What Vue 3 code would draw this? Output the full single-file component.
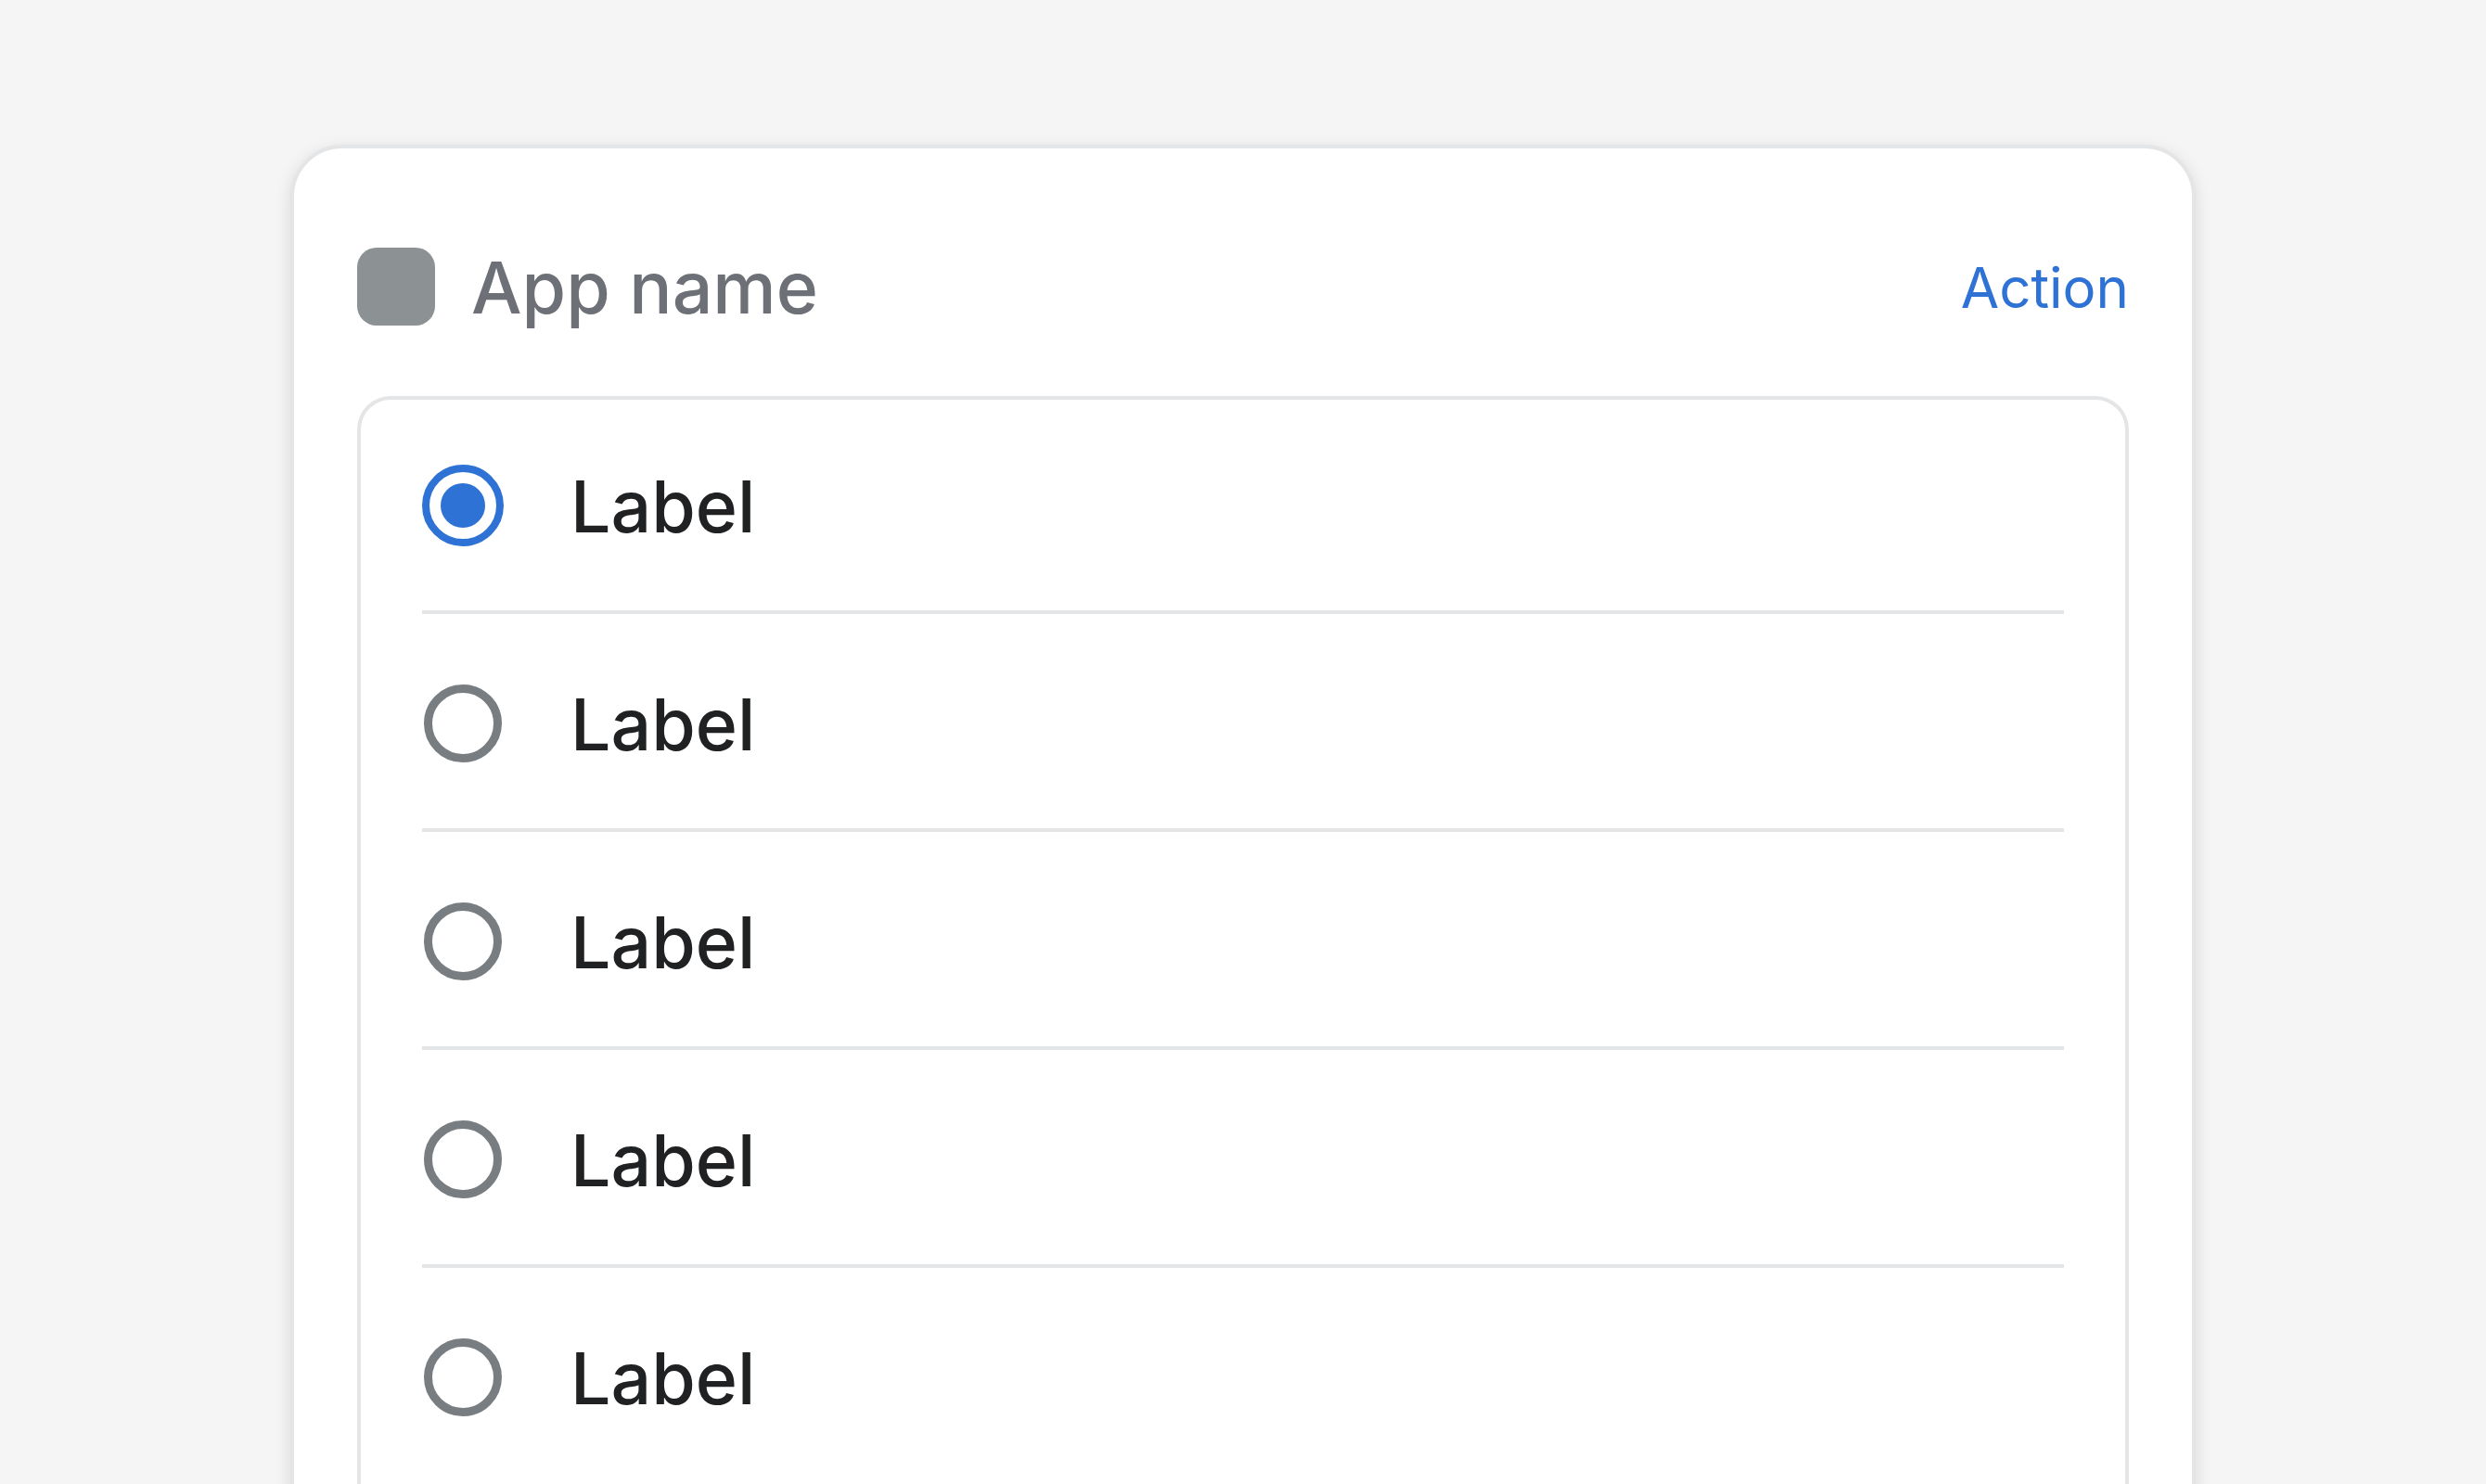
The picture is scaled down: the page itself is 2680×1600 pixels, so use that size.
<script setup>
import { ref } from 'vue'

const options = [1, 2, 3, 4, 5]
const selected = ref(1)
</script>

<template>
  <main class="page">
    <section class="card">
      <header class="card-header">
        <span class="app-icon" aria-hidden="true"></span>
        <h1 class="app-name">App name</h1>
        <button type="button" class="action">Action</button>
      </header>
      <ul class="options">
        <li v-for="id in options" :key="id" class="option">
          <input
            :id="`option-${id}`"
            v-model="selected"
            class="radio"
            type="radio"
            name="option"
            :value="id"
          />
          <label class="option-label" :for="`option-${id}`">Label</label>
        </li>
      </ul>
    </section>
  </main>
</template>

<style>
body {
  margin: 0;
  background: #f5f5f5;
}
</style>

<style scoped>
.page {
  box-sizing: border-box;
  height: 100vh;
  overflow: hidden;
  padding: 156px 313px 0;
  background: #f5f5f5;
  font-family: Inter, "Liberation Sans", sans-serif;
}

.card {
  padding: 0 68px 68px;
  border: 4px solid #e3e5e7;
  border-radius: 56px;
  background: #fff;
  box-shadow: 0 5px 18px rgba(0, 0, 0, 0.12);
}

.card-header {
  display: flex;
  align-items: center;
  padding: 107px 0 76px;
}

.app-icon {
  flex: none;
  width: 84px;
  height: 84px;
  border-radius: 21px;
  background: #8c9194;
}

.app-name {
  flex: 1;
  margin: 0 0 0 39px;
  padding-top: 2px;
  font-size: 77px;
  font-weight: 500;
  line-height: 82px;
  color: #6d7076;
}

.action {
  margin: 0;
  padding: 2px 0 0;
  border: 0;
  background: none;
  font-family: inherit;
  font-size: 60px;
  font-weight: 400;
  line-height: 82px;
  color: #2d72d4;
  cursor: pointer;
}

.options {
  margin: 0;
  padding: 0 70px 68px;
  border-radius: 36px;
  box-shadow: inset 0 0 0 4px #e3e5e7;
  list-style: none;
}

.option {
  display: flex;
  align-items: center;
  height: 235px;
  box-shadow: inset 0 -4px #e3e5e7;
}

.option:last-child {
  box-shadow: none;
}

.radio {
  appearance: none;
  flex: none;
  box-sizing: border-box;
  width: 84px;
  height: 84px;
  margin: 0 2px;
  border: 9px solid #787d81;
  border-radius: 50%;
  background: #fff;
}

.radio:checked {
  width: 88px;
  height: 88px;
  margin: 0;
  padding: 12px;
  border: 8px solid #2d72d4;
  background-color: #2d72d4;
  background-clip: content-box;
}

.option-label {
  flex: 1;
  padding: 2px 0 0 72px;
  font-size: 77px;
  font-weight: 500;
  line-height: 82px;
  color: #202123;
}
</style>
